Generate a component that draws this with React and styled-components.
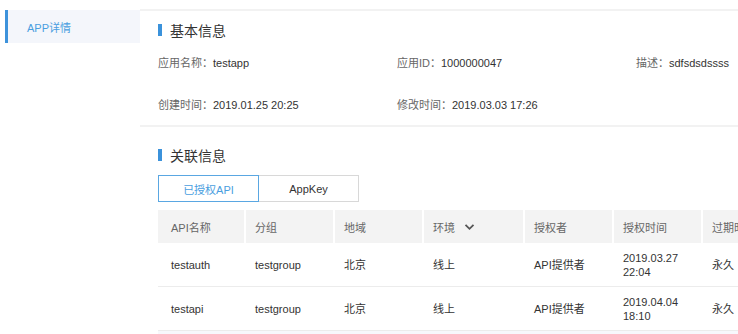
import React from "react";
import styled, { createGlobalStyle } from "styled-components";

const Global = createGlobalStyle`
  html, body { margin: 0; padding: 0; background: #fff; overflow: hidden; }
  body { font-family: "Liberation Sans", "Noto Sans CJK SC", sans-serif; color: #333; }
`;

const Page = styled.div`
  display: flex;
  width: 738px;
  height: 334px;
  overflow: hidden;
`;

const Sidebar = styled.aside`
  width: 140px;
  flex: none;
  padding-top: 10px;
  padding-left: 5px;
  box-sizing: border-box;
`;

const NavItem = styled.div`
  height: 33px;
  display: flex;
  align-items: center;
  padding-left: 19px;
  background: ${p => (p.$active ? "#f4f6fb" : "transparent")};
  border-left: 3px solid ${p => (p.$active ? "#3d92db" : "transparent")};
  color: ${p => (p.$active ? "#4a9ee0" : "#333")};
  font-size: 11px;
`;

const Main = styled.main`
  flex: 1;
  min-width: 0;
  margin-top: 9px;
  border-top: 2px solid #f2f2f2;
  overflow: hidden;
`;

const Section = styled.section`
  padding: ${p => p.$top}px 0 0 18px;
  border-bottom: ${p => (p.$divider ? "2px solid #f2f2f2" : "none")};
`;

const Title = styled.h2`
  margin: 0;
  height: 20px;
  display: flex;
  align-items: center;
  gap: 8px;
  font-size: 14px;
  font-weight: normal;
  color: #333;
  &::before {
    content: "";
    width: 4px;
    height: 12px;
    background: #3b92db;
  }
`;

const InfoGrid = styled.div`
  margin-top: 1px;
  display: grid;
  grid-template-columns: 239px 239px 1fr;
  grid-auto-rows: 42px;
  align-items: center;
  font-size: 11px;
`;

const Info = styled.div`
  white-space: nowrap;
`;

const Label = styled.span`
  color: #666;
`;

const Value = styled.span`
  color: #333;
`;

const Tabs = styled.div`
  margin-top: 10px;
  display: flex;
`;

const Tab = styled.div`
  width: 101px;
  height: 27px;
  box-sizing: border-box;
  display: flex;
  align-items: center;
  justify-content: center;
  font-size: 11px;
  border: 1px solid ${p => (p.$active ? "#5aa7e2" : "#d8d8d8")};
  color: ${p => (p.$active ? "#4a9ee0" : "#333")};
  & + & { border-left: none; width: 100px; }
`;

const Table = styled.div`
  margin-top: 8px;
  width: 700px;
  font-size: 11px;
`;

const cols = "86px 87px 87px 99px 87px 87px 87px";

const HeadRow = styled.div`
  display: grid;
  grid-template-columns: ${cols};
  column-gap: 2px;
  height: 33px;
`;

const HeadCell = styled.div`
  background: #f3f3f3;
  color: #666;
  display: flex;
  align-items: center;
  gap: 9px;
  padding-left: ${p => (p.$first ? 13 : 9)}px;
  white-space: nowrap;
  overflow: hidden;
`;

const Row = styled.div`
  display: grid;
  grid-template-columns: ${cols};
  column-gap: 2px;
  height: 44px;
  box-sizing: border-box;
  border-bottom: 1px solid #ececec;
  background: ${p => (p.$muted ? "#f7f8fc" : "#fff")};
`;

const Cell = styled.div`
  display: flex;
  align-items: center;
  padding-left: ${p => (p.$first ? 13 : 9)}px;
  color: #333;
  line-height: 14px;
  white-space: nowrap;
  overflow: hidden;
`;

const Chevron = () => (
  <svg width="11" height="8" viewBox="0 0 11 8">
    <path d="M1.5 1.8 L5.5 5.8 L9.5 1.8" fill="none" stroke="#555" strokeWidth="1.8" />
  </svg>
);

const rows = [
  ["testauth", "testgroup", "北京", "线上", "API提供者", ["2019.03.27", "22:04"], "永久"],
  ["testapi", "testgroup", "北京", "线上", "API提供者", ["2019.04.04", "18:10"], "永久"],
];

export default function App() {
  return (
    <>
      <Global />
      <Page>
        <Sidebar>
          <NavItem $active>APP详情</NavItem>
        </Sidebar>
        <Main>
          <Section $top={9} $divider>
            <Title>基本信息</Title>
            <InfoGrid>
              <Info><Label>应用名称：</Label><Value>testapp</Value></Info>
              <Info><Label>应用ID：</Label><Value>1000000047</Value></Info>
              <Info><Label>描述：</Label><Value>sdfsdsdssss</Value></Info>
              <Info><Label>创建时间：</Label><Value>2019.01.25 20:25</Value></Info>
              <Info><Label>修改时间：</Label><Value>2019.03.03 17:26</Value></Info>
            </InfoGrid>
          </Section>
          <Section $top={18}>
            <Title>关联信息</Title>
            <Tabs>
              <Tab $active>已授权API</Tab>
              <Tab>AppKey</Tab>
            </Tabs>
            <Table>
              <HeadRow>
                <HeadCell $first>API名称</HeadCell>
                <HeadCell>分组</HeadCell>
                <HeadCell>地域</HeadCell>
                <HeadCell>环境 <Chevron /></HeadCell>
                <HeadCell>授权者</HeadCell>
                <HeadCell>授权时间</HeadCell>
                <HeadCell>过期时间</HeadCell>
              </HeadRow>
              {rows.map((r, i) => (
                <Row key={i}>
                  {r.map((c, j) => (
                    <Cell key={j} $first={j === 0}>
                      {Array.isArray(c) ? (
                        <span>{c[0]}<br />{c[1]}</span>
                      ) : c}
                    </Cell>
                  ))}
                </Row>
              ))}
              <Row $muted />
            </Table>
          </Section>
        </Main>
      </Page>
    </>
  );
}
